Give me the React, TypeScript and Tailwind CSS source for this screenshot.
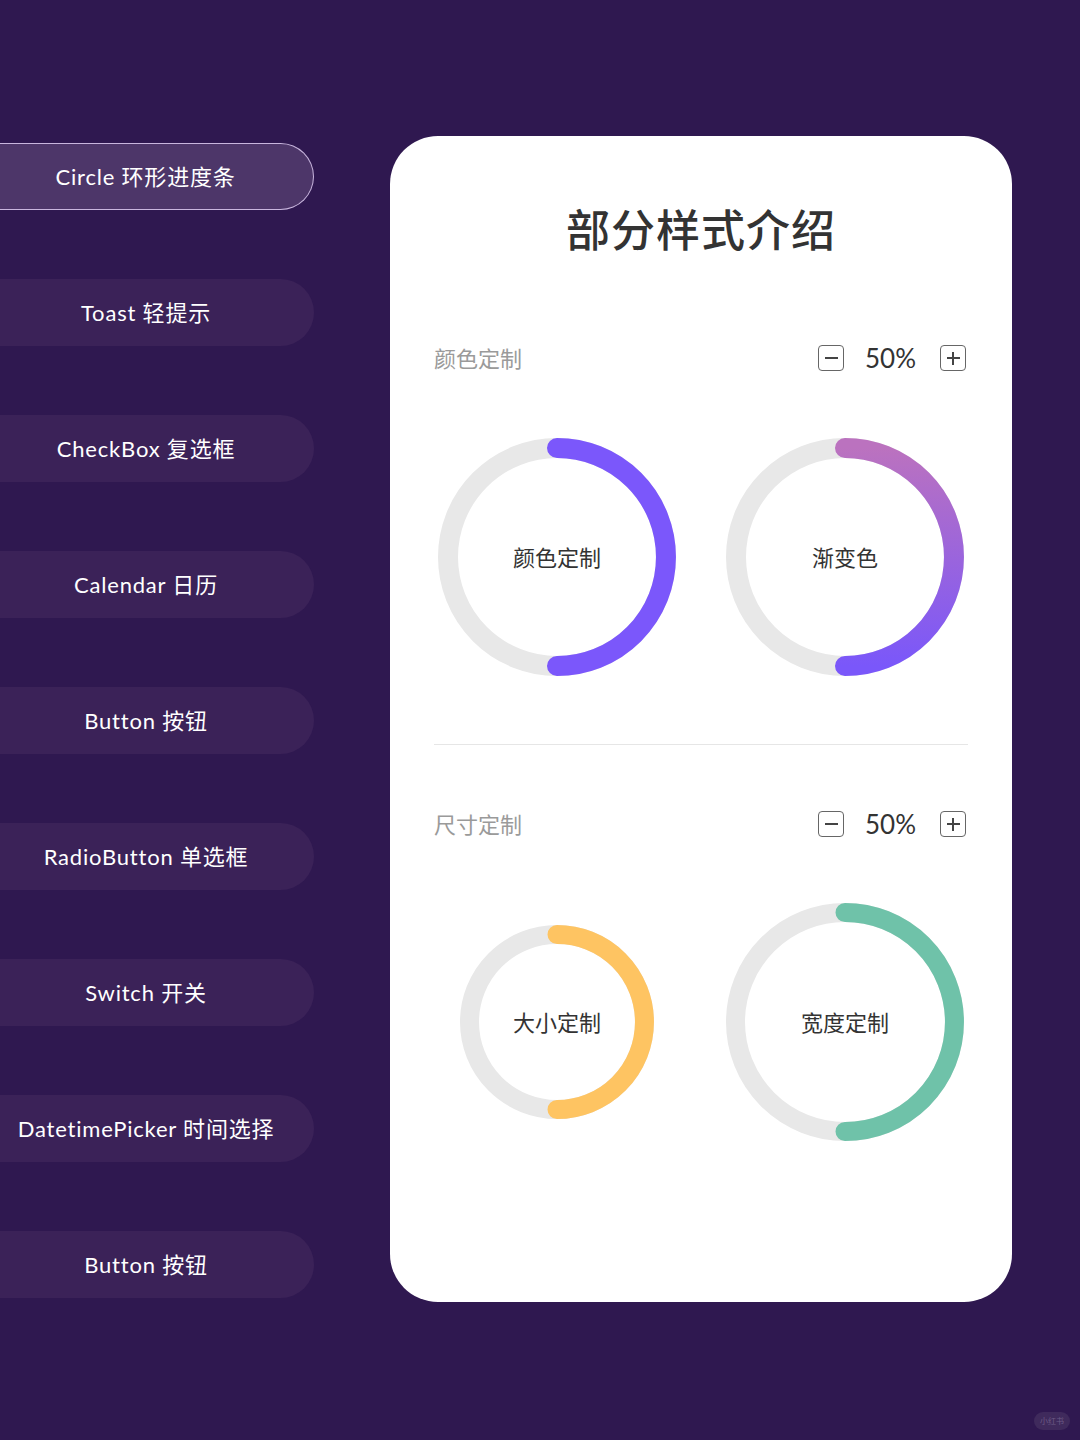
import React from "react";

const FONT = { fontFamily: 'Lato, "Noto Sans CJK SC", sans-serif' };

const items = [
  "Circle 环形进度条",
  "Toast 轻提示",
  "CheckBox 复选框",
  "Calendar 日历",
  "Button 按钮",
  "RadioButton 单选框",
  "Switch 开关",
  "DatetimePicker 时间选择",
  "Button 按钮",
];

function Ring({
  size,
  stroke,
  color,
  gradient,
  label,
  id,
}: {
  size: number;
  stroke: number;
  color?: string;
  gradient?: [string, string];
  label: string;
  id: string;
}) {
  const c = size / 2;
  const r = c - stroke / 2;
  return (
    <div className="relative flex items-center justify-center" style={{ width: size, height: size }}>
      <svg width={size} height={size} className="absolute inset-0 overflow-visible">
        {gradient && (
          <defs>
            <linearGradient id={id} x1="0" y1="0" x2="0" y2="1">
              <stop offset="0%" stopColor={gradient[0]} />
              <stop offset="100%" stopColor={gradient[1]} />
            </linearGradient>
          </defs>
        )}
        <circle cx={c} cy={c} r={r} fill="none" stroke="#e8e8e8" strokeWidth={stroke} />
        <path
          d={`M ${c} ${stroke / 2} A ${r} ${r} 0 0 1 ${c} ${size - stroke / 2}`}
          fill="none"
          stroke={gradient ? `url(#${id})` : color}
          strokeWidth={stroke}
          strokeLinecap="round"
        />
      </svg>
      <span className="relative text-[22px] text-[#333333]" style={FONT}>
        {label}
      </span>
    </div>
  );
}

function Stepper() {
  return (
    <div className="flex items-center mr-[2px]">
      <div className="w-[26px] h-[26px] border-[1.5px] border-[#666666] rounded-[4px] flex items-center justify-center">
        <div className="w-[13px] h-[1.5px] bg-[#444444]" />
      </div>
      <span className="ml-[21px] mr-[24px] text-[26px] leading-none text-[#333333]" style={FONT}>
        50%
      </span>
      <div className="relative w-[26px] h-[26px] border-[1.5px] border-[#666666] rounded-[4px] flex items-center justify-center">
        <div className="w-[13px] h-[1.5px] bg-[#444444]" />
        <div className="absolute w-[1.5px] h-[13px] bg-[#444444]" />
      </div>
    </div>
  );
}

function Header({ title }: { title: string }) {
  return (
    <div className="flex items-center justify-between h-[26px]">
      <span className="text-[22px] text-[#9a9a9a]" style={FONT}>
        {title}
      </span>
      <Stepper />
    </div>
  );
}

export default function App() {
  return (
    <div className="relative w-[1080px] h-[1440px] bg-[#2f1850] flex overflow-hidden" style={FONT}>
      <div className="flex flex-col gap-[69px] pt-[143px] w-[390px]">
        {items.map((t, i) => (
          <div
            key={i}
            className={
              i === 0
                ? "w-[314px] h-[67px] rounded-r-full bg-[#4d3669] border-[1.5px] border-l-0 border-[#c9b6de] flex items-center justify-center pr-[22px]"
                : "w-[314px] h-[67px] rounded-r-full bg-[#3b2258] flex items-center justify-center pr-[22px]"
            }
          >
            <span className="text-[22px] text-white tracking-[0.8px] whitespace-nowrap">{t}</span>
          </div>
        ))}
      </div>

      <div className="mt-[136px] w-[622px] h-[1166px] bg-white rounded-[48px] px-[44px] pt-[200px] flex flex-col relative">
        <div className="absolute left-0 right-0 top-[64px] h-[56px] flex items-center justify-center">
          <span className="text-[44px] font-medium text-[#333333] tracking-[1px]" style={{ fontFamily: '"Noto Sans CJK SC", sans-serif' }}>
            部分样式介绍
          </span>
        </div>
        <div className="mt-[9px]">
          <Header title="颜色定制" />
        </div>
        <div className="flex ml-[4px] gap-[50px] mt-[67px]">
          <Ring size={238} stroke={20} color="#7b57fb" label="颜色定制" id="g1" />
          <Ring size={238} stroke={20} gradient={["#bb72bf", "#7a57fa"]} label="渐变色" id="g2" />
        </div>
        <div className="mt-[68px] h-px bg-[#e6e6e6]" />
        <div className="mt-[66px]">
          <Header title="尺寸定制" />
        </div>
        <div className="flex ml-[4px] gap-[50px] mt-[66px]">
          <div className="w-[238px] h-[238px] flex items-center justify-center">
            <Ring size={194} stroke={19} color="#fec462" label="大小定制" id="g3" />
          </div>
          <Ring size={238} stroke={19} color="#6fc2a9" label="宽度定制" id="g4" />
        </div>
      </div>

      <div className="absolute right-[10px] bottom-[10px] w-[36px] h-[18px] rounded-full bg-[#3f2a5c] flex items-center justify-center">
        <span className="text-[8px] text-[#6d5a86]" style={{ fontFamily: '"Noto Sans CJK SC", sans-serif' }}>小红书</span>
      </div>
    </div>
  );
}
